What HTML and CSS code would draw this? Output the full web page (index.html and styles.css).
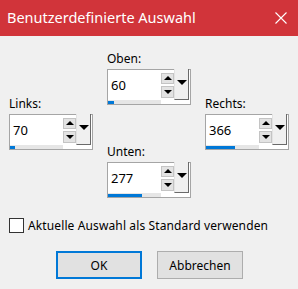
FILE: index.html
```html
<!DOCTYPE html>
<html lang="de">
<head>
    <meta charset="utf-8" />
    <title>Benutzerdefinierte Auswahl</title>
    <link rel="stylesheet" href="styles.css">
</head>
<body>
    <div class="dialog">
        <div class="titlebar">
            <span class="title">Benutzerdefinierte Auswahl</span>
            <svg class="close" width="12" height="12" viewBox="0 0 12 12">
                <path d="M0.5 0.5 L11.5 11.5 M11.5 0.5 L0.5 11.5" stroke="#fff" stroke-width="1.1" fill="none" />
            </svg>
        </div>

        <div class="fields">
            <div class="col side">
                <div class="field">
                    <div class="label">Links:</div>
                    <div class="spin">
                        <div class="spin-main">
                            <span class="value">70</span>
                            <div class="arrows"><span class="arr up"></span><span class="arr down"></span></div>
                            <span class="drop"></span>
                        </div>
                        <div class="track"><div class="fill" style="width:5px"></div></div>
                    </div>
                </div>
            </div>
            <div class="col middle">
                <div class="field">
                    <div class="label">Oben:</div>
                    <div class="spin">
                        <div class="spin-main">
                            <span class="value">60</span>
                            <div class="arrows"><span class="arr up"></span><span class="arr down"></span></div>
                            <span class="drop"></span>
                        </div>
                        <div class="track"><div class="fill" style="width:6px"></div></div>
                    </div>
                </div>
                <div class="field unten">
                    <div class="label">Unten:</div>
                    <div class="spin">
                        <div class="spin-main">
                            <span class="value">277</span>
                            <div class="arrows"><span class="arr up"></span><span class="arr down"></span></div>
                            <span class="drop"></span>
                        </div>
                        <div class="track"><div class="fill" style="width:34px"></div></div>
                    </div>
                </div>
            </div>
            <div class="col side">
                <div class="field">
                    <div class="label">Rechts:</div>
                    <div class="spin">
                        <div class="spin-main">
                            <span class="value">366</span>
                            <div class="arrows"><span class="arr up"></span><span class="arr down"></span></div>
                            <span class="drop"></span>
                        </div>
                        <div class="track"><div class="fill" style="width:29px"></div></div>
                    </div>
                </div>
            </div>
        </div>

        <label class="check">
            <span class="box"></span>
            <span class="check-text">Aktuelle Auswahl als Standard verwenden</span>
        </label>

        <div class="buttons">
            <button class="btn default">OK</button>
            <button class="btn">Abbrechen</button>
        </div>
    </div>
</body>
</html>
```

FILE: styles.css
```css
* {
    margin: 0;
    padding: 0;
    box-sizing: border-box;
}
body {
    background: #f0f0f0;
    font-family: "Noto Sans", "Open Sans", sans-serif;
    font-size: 12px;
    color: #000;
}
.dialog {
    width: 298px;
    height: 289px;
}
.titlebar {
    height: 36px;
    background: #d1343a;
    color: #fff;
    display: flex;
    align-items: center;
    justify-content: space-between;
    padding: 0 11px 0 7px;
}
.title {
    font-size: 14.5px;
    padding-bottom: 2px;
}
.close {
    display: block;
}

.fields {
    display: flex;
    align-items: flex-start;
    gap: 14px;
    padding: 16px 0 0 9px;
}
.side {
    margin-top: 45px;
}
.label {
    height: 14px;
    line-height: 14px;
    margin-bottom: 3px;
}
.unten {
    margin-top: 40px;
}
.spin {
    width: 84px;
    height: 36px;
    border: 1px solid #a5a5a5;
    background: #fff;
    display: flex;
    flex-direction: column;
}
.spin-main {
    height: 30px;
    display: flex;
    align-items: center;
}
.value {
    flex: 1;
    padding-left: 3px;
    font-size: 13px;
}
.arrows {
    display: flex;
    flex-direction: column;
    gap: 2px;
}
.arr {
    width: 13px;
    height: 11px;
    background: #e3e3e3;
    border: 1px solid #c4c4c4;
    display: flex;
    align-items: center;
    justify-content: center;
}
.arr.down {
    height: 12px;
}
.arr::after {
    content: "";
    border-left: 4px solid transparent;
    border-right: 4px solid transparent;
}
.up::after {
    border-bottom: 4px solid #000;
}
.down::after {
    border-top: 4px solid #000;
}
.drop {
    width: 15px;
    height: 31px;
    margin: -1px 1px 0 0;
    align-self: flex-start;
    background: #f0f0f0;
    border-left: 1px solid #e3e3e3;
    border-right: 1px solid #6a6a6a;
    border-bottom: 1px solid #6a6a6a;
    display: flex;
    align-items: center;
    justify-content: center;
    padding-bottom: 4px;
}
.drop::after {
    content: "";
    border-left: 5px solid transparent;
    border-right: 5px solid transparent;
    border-top: 5px solid #000;
}
.track {
    width: 53px;
    height: 4px;
    background: #e6e6e6;
    padding-top: 1px;
}
.fill {
    height: 3px;
    background: #0078d7;
}

.check {
    display: flex;
    align-items: center;
    gap: 4px;
    margin: 20px 0 0 9px;
    height: 15px;
}
.check-text {
    letter-spacing: 0.12px;
}
.box {
    width: 15px;
    height: 15px;
    border: 1px solid #333;
    background: #fff;
}

.buttons {
    display: flex;
    justify-content: center;
    gap: 15px;
    margin-top: 18px;
    padding-left: 1px;
}
.btn {
    width: 86px;
    height: 28px;
    background: #e1e1e1;
    border: 1px solid #adadad;
    font-family: "Noto Sans", "Open Sans", sans-serif;
    font-size: 12px;
    color: #000;
}
.btn.default {
    border: 2px solid #0078d7;
}
```
